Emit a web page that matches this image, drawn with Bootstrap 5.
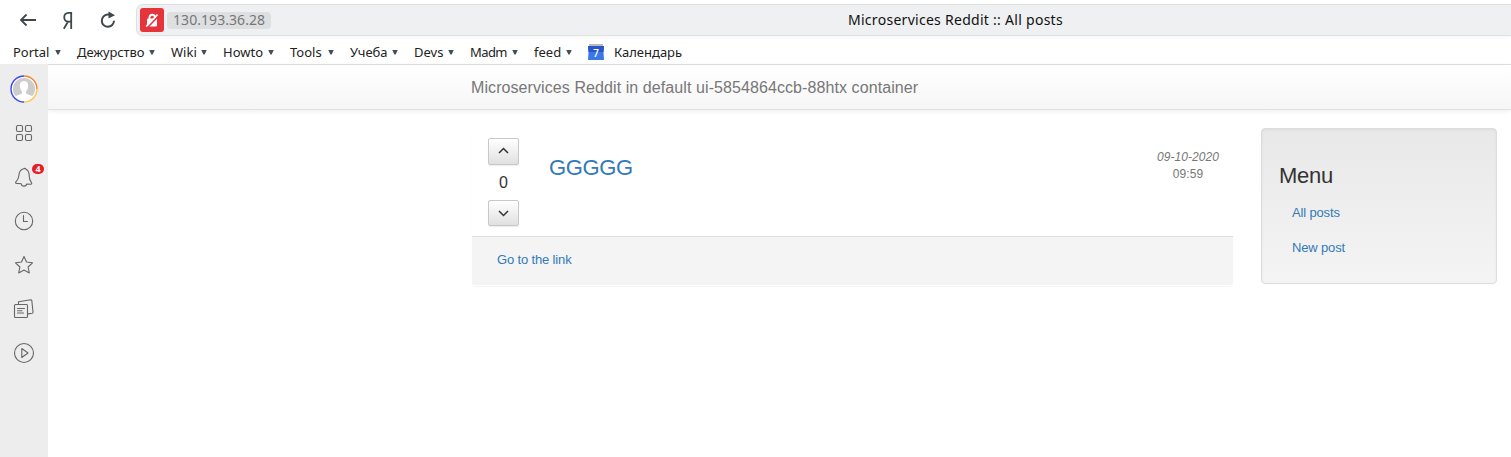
<!DOCTYPE html>
<html lang="en">
<head>
<meta charset="utf-8">
<meta name="viewport" content="width=device-width, initial-scale=1">
<title>Microservices Reddit :: All posts</title>
<link href="https://cdn.jsdelivr.net/npm/bootstrap@5.3.0/dist/css/bootstrap.min.css" rel="stylesheet">
<style>
body{font:13px/18px "Liberation Sans",sans-serif;color:#333;background:#fff;height:457px;overflow:hidden}
a{color:#337ab7;text-decoration:none}
svg{display:block;flex:none}
.chrome{font-family:"Noto Sans",sans-serif;color:#222}
.toolbar{height:40px;padding-left:16px}
.tool{width:24px;height:24px;margin-right:16px}
.address{height:32px;background:#eff0f2;border:1px solid #dfe0e1;border-right:0;border-radius:7px 0 0 7px;box-shadow:0 2px 3px #00000008}
.lock{width:24px;height:24px;margin-left:3px;background:#e5343b;border-radius:3px}
.ip{width:104px;height:17px;line-height:16px;margin-left:3px;padding-left:6px;background:#dedfe1;border-radius:4px;font-size:14px;letter-spacing:.06px;color:#777}
.page-title{margin-left:577px;font-size:14px;letter-spacing:.28px;color:#111;white-space:nowrap}
.bookmarks{height:24px;padding-left:13px;gap:16px;white-space:nowrap}
.caret::after{content:"";width:6px;height:5px;background:#444e55;clip-path:polygon(0 0,100% 0,60% 100%,40% 100%)}
.side{width:48px;background:#ededed;padding-top:11px;gap:16px;position:relative;z-index:1}
.side svg{overflow:visible}
.side .ico{fill:none;stroke:#666;stroke-width:1.1;stroke-linejoin:round;stroke-linecap:round}
.count{position:absolute;left:22px;top:1px;width:12px;height:10px;border-radius:5px;background:#ec1c24;color:#fff;font:bold 9px/10px "Noto Sans",sans-serif;text-align:center}
.view{border-top:1px solid #e0e0e0}
.head{height:45px;padding-left:423px;background:linear-gradient(#fff,#f6f6f6);border-bottom:1px solid #e0e0e0;box-shadow:0 1px 5px #00000013;font-size:16px;letter-spacing:.085px;color:#777;line-height:46px}
.content{padding:18px 14px 0 424px;gap:28px}
.post{width:761px;height:158px;border-radius:4px;box-shadow:0 1px 1px #0000000d}
.post-main{height:108px;padding-left:16px}
.votes{width:31px;padding-top:10px}
.vote{height:27px;width:31px;padding:0 0 2px;border:1px solid #c8c8c8;border-radius:2px;background:linear-gradient(#fff,#e0e0e0);box-shadow:0 1px 1px #00000013}
.vote.down{height:26px;padding-bottom:0}
.score{height:35px;line-height:35px;font-size:16px}
.post-title{font-size:22px;line-height:24px;margin:28px 0 0 30px;letter-spacing:-.35px}
.stamp{width:70px;margin:21px 10px 0 auto;font-size:12px;line-height:17px;color:#777;letter-spacing:.08px}
.post-foot{height:49px;background:#f4f4f4;border-top:1px solid #ddd;padding:14px 25px;border-radius:0 0 3px 3px}
.post-foot a,.menu a{letter-spacing:-.15px}
.menu{width:236px;height:156px;border:1px solid #dcdcdc;border-radius:4px;background:linear-gradient(#e8e8e8,#f4f4f4);box-shadow:inset 0 1px 3px #0000000d;padding:34px 17px}
.menu h2{font-size:22px;line-height:26px;margin:0 0 15px;font-weight:400;letter-spacing:-.25px}
.menu a{display:block;margin:0 0 17px 13px}
</style>
</head>
<body class="d-flex flex-column">
<header class="chrome">
  <div class="toolbar d-flex align-items-center">
    <svg class="tool" viewBox="16 8 24 24"><path d="M36 20H21M26.500 14.500L21 20l5.500 5.500" fill="none" stroke="#3d474c" stroke-width="1.800"/></svg>
    <svg class="tool" viewBox="56 8 24 24"><path d="M71.200 29V12.800H68.500C62.800 12.800 62.800 21.700 68.500 21.700H71.500M68 21.700L63.800 28.700" fill="none" stroke="#3d474c" stroke-width="1.800"/></svg>
    <svg class="tool" viewBox="96 8 24 24"><path d="M110 14.600H107.500A6.100 6.100 0 1 0 114 20.800" fill="none" stroke="#3d474c" stroke-width="2"/><path d="M108.500 11.500L115 15.200L108.500 18.500z" fill="#3d474c"/></svg>
    <div class="address d-flex align-items-center flex-grow-1">
      <span class="lock"><svg width="24" height="24" viewBox="0 0 24 24"><path d="M9.500 11V9a2.800 2.800 0 0 1 5.500 0v2" fill="none" stroke="#fff" stroke-width="1.800"/><rect x="7" y="10.500" width="10" height="8" rx="1" fill="#fff"/><path d="M7.500 19.500L18.500 8" stroke="#e5343b" stroke-width="1.800"/><path d="M6.200 18.500L17.500 6.700" stroke="#fff" stroke-width="1.700"/></svg></span>
      <span class="ip">130.193.36.28</span>
      <span class="page-title">Microservices Reddit :: All posts</span>
    </div>
  </div>
  <nav class="bookmarks d-flex align-items-center">
    <span class="caret d-flex align-items-center justify-content-between" style="width:48px">Portal</span>
    <span class="caret d-flex align-items-center justify-content-between" style="width:78px;letter-spacing:-.1px">Дежурство</span>
    <span class="caret d-flex align-items-center justify-content-between" style="width:36px">Wiki</span>
    <span class="caret d-flex align-items-center justify-content-between" style="width:51px">Howto</span>
    <span class="caret d-flex align-items-center justify-content-between" style="width:44px">Tools</span>
    <span class="caret d-flex align-items-center justify-content-between" style="width:48px">Учеба</span>
    <span class="caret d-flex align-items-center justify-content-between" style="width:40px">Devs</span>
    <span class="caret d-flex align-items-center justify-content-between" style="width:48px;letter-spacing:-.6px">Madm</span>
    <span class="caret d-flex align-items-center justify-content-between" style="width:38px">feed</span>
    <span class="d-flex align-items-center">
      <svg width="26" height="16" viewBox="0 0 26 16"><path d="M1 0h14v3H1z" fill="#bbb"/><path d="M0 2h16l-.5 6 .5 8H0l.5-8z" fill="#3b78e7"/><path d="M0 2h16l-.5 6H.5z" fill="#2a56c6"/><text x="8" y="13" text-anchor="middle" font-family="Roboto,sans-serif" font-size="10" fill="#fff" font-weight="500">7</text></svg>Календарь</span>
  </nav>
</header>
<div class="d-flex flex-grow-1">
  <aside class="side d-flex flex-column align-items-center">
    <svg width="28" height="28" viewBox="10 75 28 28"><circle cx="24" cy="89" r="12.300" fill="#fff"/><circle cx="24" cy="89" r="11" fill="#ccc"/><path d="M24 81c-4 0-4.500 3-4 6.500.3 2 1.200 3 2 4v2c-2 1.500-5 1.200-6.500 3.200a11.500 11.500 0 0 0 17 0c-1.500-2-4.500-1.700-6.500-3.200v-2c.8-1 1.700-2 2-4 .5-3.500 0-6.500-4-6.500z" fill="#fff"/><g fill="none" stroke-width="1.400"><path d="M24 102A13 13 0 0 1 24 76" stroke="#4048e8"/><path d="M24 76A13 13 0 0 1 37 89" stroke="#f58634"/><path d="M37 89A13 13 0 0 1 24 102" stroke="#fcc84b"/></g></svg>
    <svg class="ico" width="28" height="28" viewBox="10 119 28 28"><rect x="16.500" y="125.500" width="6" height="6" rx="1.500"/><rect x="25.500" y="125.500" width="6" height="6" rx="1.500"/><rect x="16.500" y="134.500" width="6" height="6" rx="1.500"/><rect x="25.500" y="134.500" width="6" height="6" rx="1.500"/></svg>
    <div class="position-relative"><svg class="ico" width="28" height="28" viewBox="10 163 28 28"><path d="M23.800 168.800a1.300 1.300 0 0 1 2.200.4c2.600 1.200 3.300 3.500 3.200 7 0 3 1 4.600 2.400 6.800.4.900 0 1.300-1 1.200l-3.800-.2c-.8 3-5.300 2.800-5.500-.3l-4.700-.3c-1-.1-1.300-.6-.7-1.500 1.800-2 2.800-3.400 3-6.400.2-3.500 1.700-6 4.900-6.700z"/></svg><span class="count">4</span></div>
    <svg class="ico" width="28" height="28" viewBox="10 207 28 28"><circle cx="24" cy="221" r="8.700"/><path d="M23.500 215.500v6h4"/></svg>
    <svg class="ico" width="28" height="28" viewBox="10 251 28 28"><path d="M24 256.500l2.500 5.500 6 .8-4.400 4.200 1.200 5.900-5.300-2.900-5.300 2.900 1.200-5.900-4.400-4.200 6-.8z"/></svg>
    <svg class="ico" width="28" height="28" viewBox="10 295 28 28"><rect x="14.500" y="304.500" width="13" height="13" rx="1"/><path d="M18.500 304v-2.300l12.300-2q.8 0 1 .8l1.200 11.500q0 1-.8 1.200l-4 .7M17.500 308.500h7M17.500 310.800h4.500M17.500 313h6"/></svg>
    <svg class="ico" width="28" height="28" viewBox="10 339 28 28"><circle cx="24" cy="353" r="9.500"/><path d="M21.800 348.500v9l6.200-4.500z"/></svg>
  </aside>
  <main class="view flex-grow-1">
    <div class="head">Microservices Reddit in default ui-5854864ccb-88htx container</div>
    <div class="content d-flex align-items-start">
      <article class="post">
        <div class="post-main d-flex align-items-start">
          <div class="votes text-center">
            <button class="vote d-flex align-items-center justify-content-center" aria-label="Up"><svg width="11" height="8" viewBox="0 0 11 8"><path d="M1 6l4.500-4.500L10 6" fill="none" stroke="#333" stroke-width="1.500"/></svg></button>
            <div class="score">0</div>
            <button class="vote down d-flex align-items-center justify-content-center" aria-label="Down"><svg width="11" height="8" viewBox="0 0 11 8"><path d="M1 2l4.500 4.500L10 2" fill="none" stroke="#333" stroke-width="1.500"/></svg></button>
          </div>
          <a class="post-title" href="#">GGGGG</a>
          <div class="stamp text-center"><em>09-10-2020</em><br>09:59</div>
        </div>
        <div class="post-foot"><a href="#">Go to the link</a></div>
      </article>
      <aside class="menu">
        <h2>Menu</h2>
        <a href="#">All posts</a>
        <a href="#">New post</a>
      </aside>
    </div>
  </main>
</div>
<script src="https://cdn.jsdelivr.net/npm/bootstrap@5.3.0/dist/js/bootstrap.bundle.min.js"></script>
</body>
</html>
